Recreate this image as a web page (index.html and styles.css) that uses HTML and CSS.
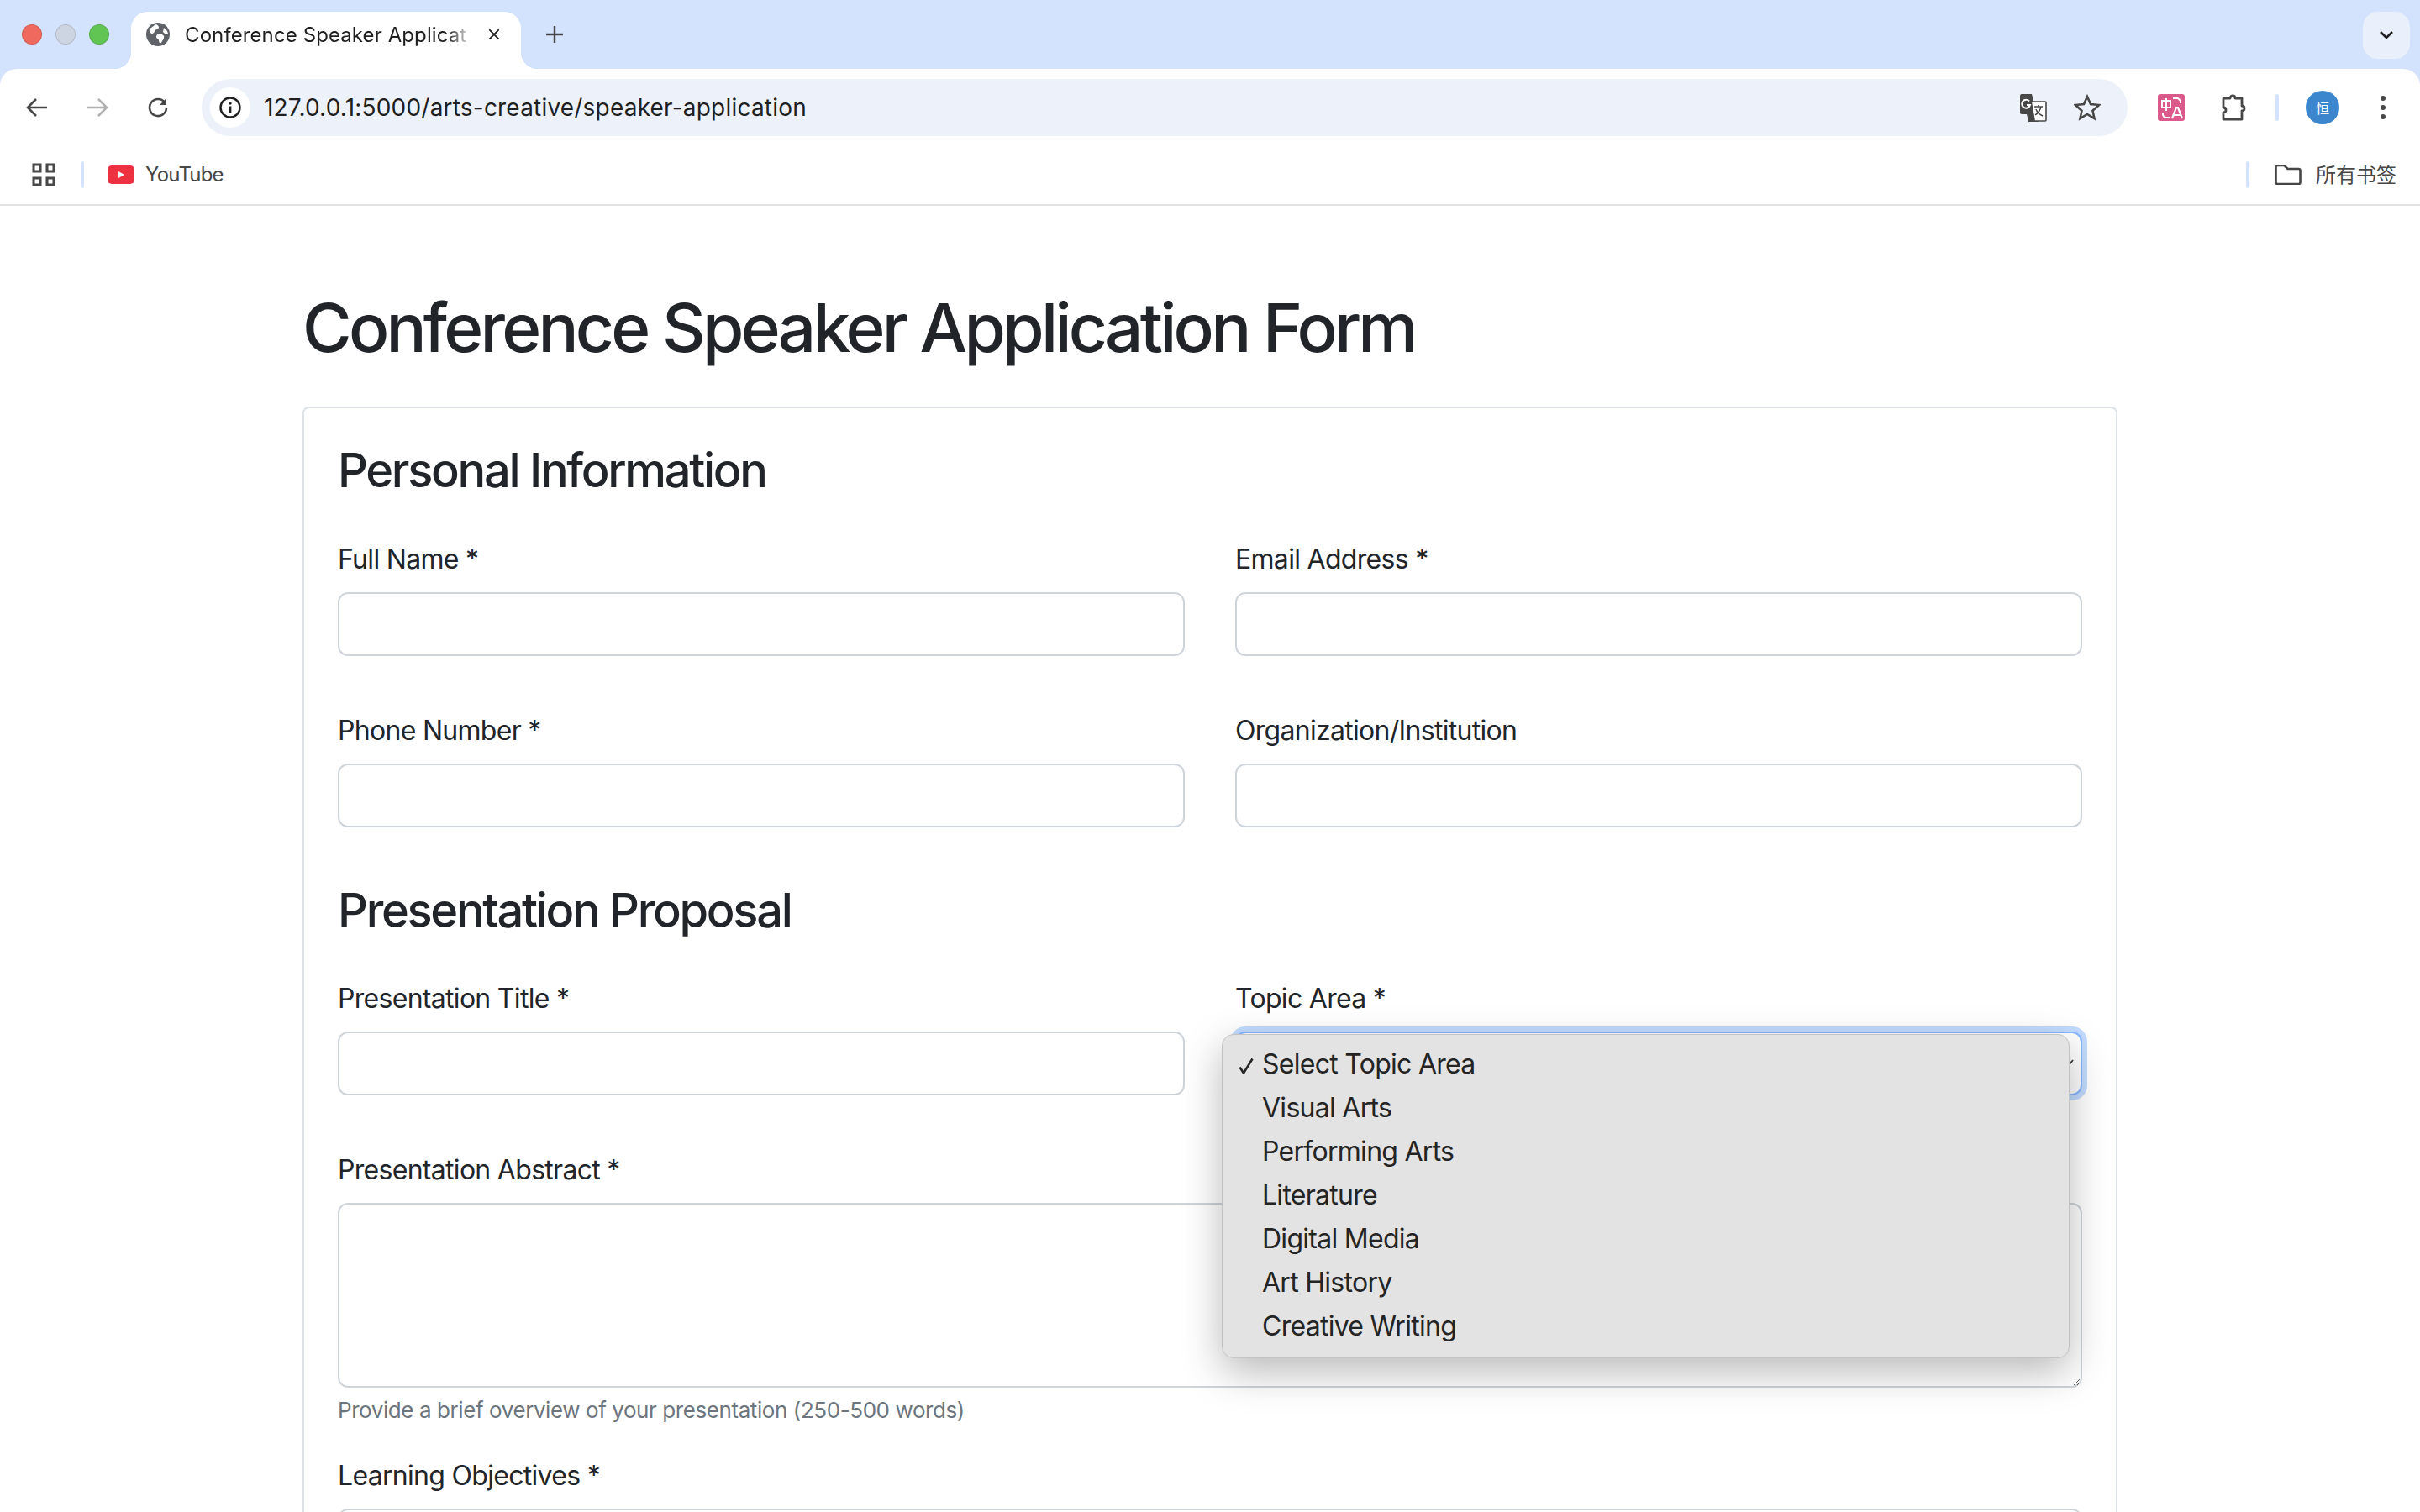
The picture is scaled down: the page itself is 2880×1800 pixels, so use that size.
FILE: index.html
```html
<!DOCTYPE html>
<html lang="en">
<head>
<meta charset="utf-8">
<title>Conference Speaker Application Form</title>
<link rel="stylesheet" href="styles.css">
</head>
<body>
<header class="browser">
  <div class="tabstrip">
    <div class="lights">
      <span class="light red"></span><span class="light grey"></span><span class="light green"></span>
    </div>
    <div class="tab">
      <svg class="globe" viewBox="0 0 28 28"><circle cx="14" cy="14" r="14" fill="#5f6368"/><path d="M4 7c3-1 5-4 8-5 2 1 3 2 3 4-1 2-4 2-5 4 0 2-2 3-3 3S3 11 4 7zM14 14c3-1 6 0 7 2 1 3-2 5-3 8-2 1-3-1-3-3s-3-2-3-4 1-3 2-3zM21 6l4 4 1 3-3 1-3-3z" fill="#fff"/></svg>
      <span class="tab-title">Conference Speaker Applicat</span>
      <svg class="tab-close" viewBox="0 0 20 20"><path d="M3 3l14 14M17 3L3 17" stroke="#1f1f1f" stroke-width="2.4" fill="none"/></svg>
    </div>
    <svg class="new-tab" viewBox="0 0 20 20"><path d="M10 0v20M0 10h20" stroke="#474747" stroke-width="2.4" fill="none"/></svg>
    <div class="tab-search"><svg viewBox="0 0 18 12" class="chev"><path d="M2 2l7 7 7-7" stroke="#1f1f1f" stroke-width="2.6" fill="none"/></svg></div>
  </div>
  <div class="toolbar">
    <svg class="nav back" viewBox="0 0 26 24"><path d="M25 12H3M12 2L2 12l10 10" stroke="#474747" stroke-width="2.6" fill="none"/></svg>
    <svg class="nav fwd" viewBox="0 0 26 24"><path d="M1 12h22M14 2l10 10-10 10" stroke="#b0b0b0" stroke-width="2.6" fill="none"/></svg>
    <svg class="nav reload" viewBox="0 0 26 26"><path d="M21 7a10 10 0 1 0 2 7" stroke="#474747" stroke-width="2.6" fill="none"/><path d="M23 2v8h-8z" fill="#474747"/></svg>
    <div class="omnibox">
      <span class="info"><svg viewBox="0 0 26 26"><circle cx="13" cy="13" r="11.5" stroke="#1f1f1f" stroke-width="2.4" fill="none"/><circle cx="13" cy="8" r="1.7" fill="#1f1f1f"/><path d="M13 11.5V19" stroke="#1f1f1f" stroke-width="2.8"/></svg></span>
      <span class="url">127.0.0.1:5000/arts-creative/speaker-application</span>
      <svg class="gtrans" viewBox="0 0 32 33"><path d="M2 0h12l8 32-1 1H10L8 24H2a2 2 0 0 1-2-2V2a2 2 0 0 1 2-2z" fill="#474747"/><path d="M14 9h16a1 1 0 0 1 1 1v21a1 1 0 0 1-1 1H18" fill="#fff" stroke="#474747" stroke-width="1.6"/><path d="M11 8.5a5 5 0 1 0 1 4.500H8" stroke="#fff" stroke-width="2" fill="none"/><path d="M17 15h10M22 13v2M25 15c-1 5-4 8-7 10M19 18c1 3 4 6 8 8" stroke="#474747" stroke-width="1.5" fill="none"/></svg>
      <svg class="star" viewBox="0 0 32 32"><path d="M16 3l4 9 10 1-7.500 6.800L24.500 29 16 24l-8.500 5 2-9.200L2 13l10-1z" stroke="#474747" stroke-width="2.6" fill="none"/></svg>
    </div>
    <div class="ext-pink"><svg viewBox="0 0 32 32"><rect width="32" height="32" rx="3" fill="#dc5a8b"/><path d="M5 8h10v8H5zM10 5v15" stroke="#fff" stroke-width="2" fill="none"/><path d="M18 5h6l3 3v3M6 22v3l2 3h6" stroke="#fff" stroke-width="2" fill="none"/><path d="M17 29l5-13h2l5 13M19 25h8" stroke="#fff" stroke-width="2.200" fill="none"/></svg></div>
    <svg class="puzzle" viewBox="0 0 32 32"><path d="M4 5h8c0-4 6-4 6 0h8v9c4 0 4 6 0 6v10H4v-8c4 0 4-6 0-6z" stroke="#474747" stroke-width="2.800" fill="none" stroke-linejoin="round"/></svg>
    <span class="sep"></span>
    <span class="avatar">恒</span>
    <svg class="dots" viewBox="0 0 8 30"><circle cx="4" cy="4" r="3" fill="#474747"/><circle cx="4" cy="15" r="3" fill="#474747"/><circle cx="4" cy="26" r="3" fill="#474747"/></svg>
  </div>
  <div class="bookmarks">
    <svg class="apps" viewBox="0 0 28 28"><path d="M2 2h8v8H2zM18 2h8v8h-8zM2 18h8v8H2zM18 18h8v8h-8z" stroke="#474747" stroke-width="3" fill="none"/></svg>
    <span class="sep sep-left"></span>
    <svg class="yt" viewBox="0 0 32 22"><rect width="32" height="22" rx="5" fill="#ee3140"/><path d="M13 7l7 4-7 4z" fill="#fff"/></svg>
    <span class="bm-text bm-yt">YouTube</span>
    <span class="sep sep-right"></span>
    <svg class="folder" viewBox="0 0 32 24"><path d="M1.500 3a2 2 0 0 1 2-2h8l4 4h13a2 2 0 0 1 2 2v14a2 2 0 0 1-2 2h-25a2 2 0 0 1-2-2z" stroke="#474747" stroke-width="2.600" fill="none"/></svg>
    <span class="bm-text bm-cjk">所有书签</span>
  </div>
</header>
<main class="page">
  <h1 class="page-title">Conference Speaker Application Form</h1>
  <form class="card">
    <h4 class="section first">Personal Information</h4>
    <div class="row">
      <div class="field"><label class="label">Full Name *</label><input class="control" type="text"></div>
      <div class="field"><label class="label">Email Address *</label><input class="control" type="text"></div>
    </div>
    <div class="row">
      <div class="field"><label class="label">Phone Number *</label><input class="control" type="text"></div>
      <div class="field"><label class="label">Organization/Institution</label><input class="control" type="text"></div>
    </div>
    <h4 class="section">Presentation Proposal</h4>
    <div class="row">
      <div class="field"><label class="label">Presentation Title *</label><input class="control" type="text"></div>
      <div class="field select-field">
        <label class="label">Topic Area *</label>
        <div class="control select-focus">
          <svg class="select-arrow" viewBox="0 0 8 10"><path d="M0.500 9L7 1" stroke="#343a40" stroke-width="1.800" fill="none"/></svg>
        </div>
        <ul class="menu">
          <li class="opt"><svg class="tick" viewBox="0 0 18 20"><path d="M1.500 11.500L6 18.500 16.500 1.500" stroke="#242424" stroke-width="2.600" fill="none"/></svg>Select Topic Area</li>
          <li class="opt">Visual Arts</li>
          <li class="opt">Performing Arts</li>
          <li class="opt">Literature</li>
          <li class="opt">Digital Media</li>
          <li class="opt">Art History</li>
          <li class="opt">Creative Writing</li>
        </ul>
      </div>
    </div>
    <div class="field wide">
      <label class="label">Presentation Abstract *</label>
      <textarea class="control area"></textarea>
      <div class="help">Provide a brief overview of your presentation (250-500 words)</div>
    </div>
    <div class="field wide objectives">
      <label class="label">Learning Objectives *</label>
      <textarea class="control area"></textarea>
    </div>
  </form>
</main>
</body>
</html>
```

FILE: styles.css
```css
* { box-sizing: border-box; }
html, body { margin: 0; padding: 0; height: 1800px; overflow: hidden; background: #fff; }
body { font-family: Inter, "Noto Sans CJK SC", sans-serif; color: #212529; }

.browser { height: 245px; background: #d3e3fd; }

.tabstrip { height: 82px; display: flex; align-items: flex-start; }
.lights { display: flex; gap: 16px; padding: 29px 0 0 26px; width: 156px; }
.light { width: 24px; height: 24px; border-radius: 50%; border: 1px solid rgba(0,0,0,.12); }
.red { background: #f0695e; }
.grey { background: #ced5e2; }
.green { background: #61c554; }

.tab { position: relative; width: 464px; height: 68px; margin-top: 14px; background: #fff; border-radius: 20px 20px 0 0; display: flex; align-items: center; padding: 0 24px 14px 18px; }
.tab::before, .tab::after { content: ""; position: absolute; bottom: 0; width: 20px; height: 20px; }
.tab::before { left: -20px; background: radial-gradient(circle at 0 0, #d3e3fd 20px, #fff 20.5px); }
.tab::after { right: -20px; background: radial-gradient(circle at 100% 0, #d3e3fd 20px, #fff 20.5px); }
.globe { width: 28px; height: 28px; flex: none; }
.tab-title { flex: none; margin-left: 18px; font-size: 24px; letter-spacing: .1px; color: #1f1f1f; white-space: nowrap; -webkit-mask-image: linear-gradient(90deg, #000 93%, rgba(0,0,0,.25)); mask-image: linear-gradient(90deg, #000 93%, rgba(0,0,0,.25)); }
.tab-close { width: 16px; height: 16px; flex: none; margin-left: auto; }
.new-tab { width: 20px; height: 20px; margin: 31px 0 0 30px; flex: none; }
.tab-search { margin: 14px 12px 0 auto; width: 56px; height: 56px; border-radius: 18px; background: #e9f0fc; display: flex; align-items: center; justify-content: center; }
.chev { width: 18px; height: 12px; }

.toolbar { height: 81px; padding-top: 11px; background: #fff; border-radius: 20px 20px 0 0; display: flex; align-items: center; position: relative; }
.nav { flex: none; width: 26px; height: 24px; }
.back { margin-left: 31px; }
.fwd { margin-left: 46px; }
.reload { margin-left: 46px; height: 26px; }
.omnibox { margin-left: 39px; width: 2292px; height: 68px; border-radius: 34px; background: #edf2fa; display: flex; align-items: center; padding: 0 32px 0 10px; }
.info { width: 48px; height: 48px; border-radius: 50%; background: #fff; display: flex; align-items: center; justify-content: center; flex: none; }
.info svg { width: 26px; height: 26px; }
.url { margin-left: 16px; font-size: 28px; letter-spacing: .2px; color: #1f1f1f; flex: 1; white-space: nowrap; }
.gtrans { width: 32px; height: 33px; flex: none; }
.star { width: 32px; height: 32px; flex: none; margin-left: 32px; }
.ext-pink { margin-left: 36px; width: 32px; height: 32px; flex: none; }
.ext-pink svg { display: block; width: 32px; height: 32px; }
.puzzle { margin-left: 42px; width: 32px; height: 32px; flex: none; }
.sep { width: 4px; height: 32px; border-radius: 2px; background: #d3e3fd; flex: none; }
.toolbar .sep { margin-left: 34px; }
.avatar { margin-left: 32px; width: 40px; height: 40px; border-radius: 50%; background: #3b86cc; color: #fff; font-size: 16px; display: flex; align-items: center; justify-content: center; flex: none; font-family: "Noto Sans CJK SC", sans-serif; }
.dots { margin-left: 48px; width: 8px; height: 30px; flex: none; }

.bookmarks { height: 82px; padding-top: 9px; background: #fff; border-bottom: 2px solid #e2e2e2; display: flex; align-items: center; }
.apps { margin-left: 38px; width: 28px; height: 28px; flex: none; }
.sep-left { margin-left: 30px; }
.yt { margin-left: 28px; width: 32px; height: 22px; flex: none; }
.bm-text { margin-left: 13px; font-size: 24px; color: #474747; white-space: nowrap; }
.bm-yt { letter-spacing: -.8px; }
.sep-right { margin-left: auto; }
.folder { margin-left: 30px; width: 32px; height: 24px; flex: none; }
.bm-cjk { margin-left: 17px; margin-right: 28px; margin-bottom: 2px; font-family: "Noto Sans CJK SC", sans-serif; }

.page { padding: 0 360px; }
.page-title { margin: 0; padding: 110px 0 0; height: 239px; font-size: 80px; line-height: 70px; font-weight: 500; letter-spacing: -3.75px; color: #212529; white-space: nowrap; }
.card { border: 2px solid #dee2e6; border-radius: 8px; padding: 0 40px; height: 1400px; }

.section { margin: 0; font-size: 56px; line-height: 68px; font-weight: 500; letter-spacing: -2.3px; height: 115px; }
.section.first { height: 156px; padding-top: 40px; }
.row { display: grid; grid-template-columns: 1008px 1008px; column-gap: 60px; }
.field { display: flex; flex-direction: column; height: 204px; }
.label { font-size: 32px; line-height: 48px; height: 63px; letter-spacing: -.7px; color: #212529; }
.control { display: block; flex: none; width: 100%; height: 76px; border: 2px solid #ced4da; border-radius: 12px; background: #fff; padding: 0; margin: 0; outline: 0; font: inherit; }

.select-field { position: relative; }
.select-focus { position: relative; border-color: #86b7fe; box-shadow: 0 0 0 6px rgba(13,110,253,.25); }
.select-arrow { position: absolute; right: 8px; top: 31px; width: 8px; height: 10px; }
.menu { position: absolute; left: -16px; top: 66px; width: 1009px; height: 386px; margin: 0; padding: 9px 0 0; list-style: none; background: #e3e3e3; border: 1px solid #c4c4c4; border-radius: 14px; box-shadow: 0 16px 48px rgba(0,0,0,.28); z-index: 2; }
.opt { position: relative; height: 52px; line-height: 52px; padding-left: 47px; font-size: 32px; letter-spacing: -.72px; color: #242424; }
.tick { position: absolute; left: 19px; top: 18px; width: 18px; height: 20px; }

.wide { width: 2076px; }
.wide .area { height: 220px; resize: both; }
.help { margin-top: 8px; font-size: 26px; letter-spacing: -.42px; line-height: 38px; color: #6c757d; }
.field.wide { height: 364px; }
.field.objectives { height: 300px; }
```
